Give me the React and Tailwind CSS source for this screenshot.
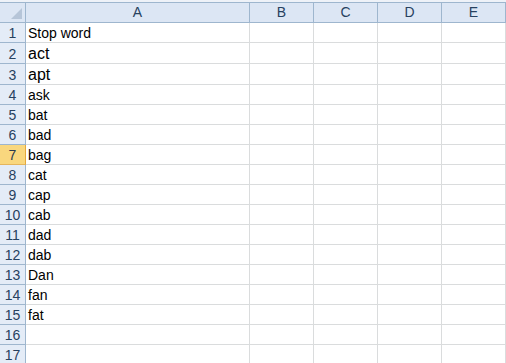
const cols = ['A', 'B', 'C', 'D', 'E']
const colWidths = ['w-[224px]', 'w-[64px]', 'w-[64px]', 'w-[64px]', 'w-[64px]']

const rows = [
  { n: 1, text: 'Stop word' },
  { n: 2, text: 'act', big: true },
  { n: 3, text: 'apt', big: true },
  { n: 4, text: 'ask' },
  { n: 5, text: 'bat' },
  { n: 6, text: 'bad' },
  { n: 7, text: 'bag', active: true },
  { n: 8, text: 'cat' },
  { n: 9, text: 'cap' },
  { n: 10, text: 'cab' },
  { n: 11, text: 'dad' },
  { n: 12, text: 'dab' },
  { n: 13, text: 'Dan' },
  { n: 14, text: 'fan' },
  { n: 15, text: 'fat' },
  { n: 16, text: '' },
  { n: 17, text: '' },
]

function HeaderRow() {
  return (
    <div className="flex h-[21px] border-y border-[#9eb6ce] bg-[#dce6f4]">
      <div className="relative w-[26px] shrink-0 border-r border-[#9eb6ce]">
        <svg className="absolute right-[3px] bottom-[3px]" width="11" height="11" viewBox="0 0 11 11">
          <polygon points="11,0 11,11 0,11" fill="#b6c5d8" />
        </svg>
      </div>
      {cols.map((c, i) => (
        <div
          key={c}
          className={`${colWidths[i]} shrink-0 border-r border-[#9eb6ce] flex items-center justify-center text-[14px] text-[#27415f]`}
        >
          {c}
        </div>
      ))}
    </div>
  )
}

function Row({ row }) {
  const h = row.big ? 'h-[21px]' : 'h-[20px]'
  return (
    <div className={`flex ${h} border-b border-[#dadcdd]`}>
      <div
        className={`w-[26px] shrink-0 flex items-end justify-center text-[14px] leading-[17px] -mb-px border-b ${
          row.active
            ? 'bg-[#f9d77e] border-r border-r-[#e4a83c] border-b-[#e4b55d] text-[#2b3a4d]'
            : 'bg-[#e4ecf7] border-r border-r-[#9eb6ce] border-b-[#9eb6ce] text-[#27415f]'
        }`}
      >
        {row.n}
      </div>
      {cols.map((c, i) => (
        <div
          key={c}
          className={`${colWidths[i]} shrink-0 border-r border-[#dadcdd] flex items-end pl-[2px] overflow-hidden whitespace-nowrap text-black ${
            row.big ? 'text-[16px] leading-[19px]' : 'text-[14px] leading-[17px]'
          }`}
        >
          {i === 0 ? row.text : ''}
        </div>
      ))}
    </div>
  )
}

export default function App() {
  return (
    <div
      className="w-[506px] h-[363px] overflow-hidden bg-white"
      style={{ fontFamily: '"Liberation Sans", Arial, sans-serif' }}
    >
      <div className="h-[2px] bg-[#eef2f8]" />
      <HeaderRow />
      {rows.map((r) => (
        <Row key={r.n} row={r} />
      ))}
    </div>
  )
}
